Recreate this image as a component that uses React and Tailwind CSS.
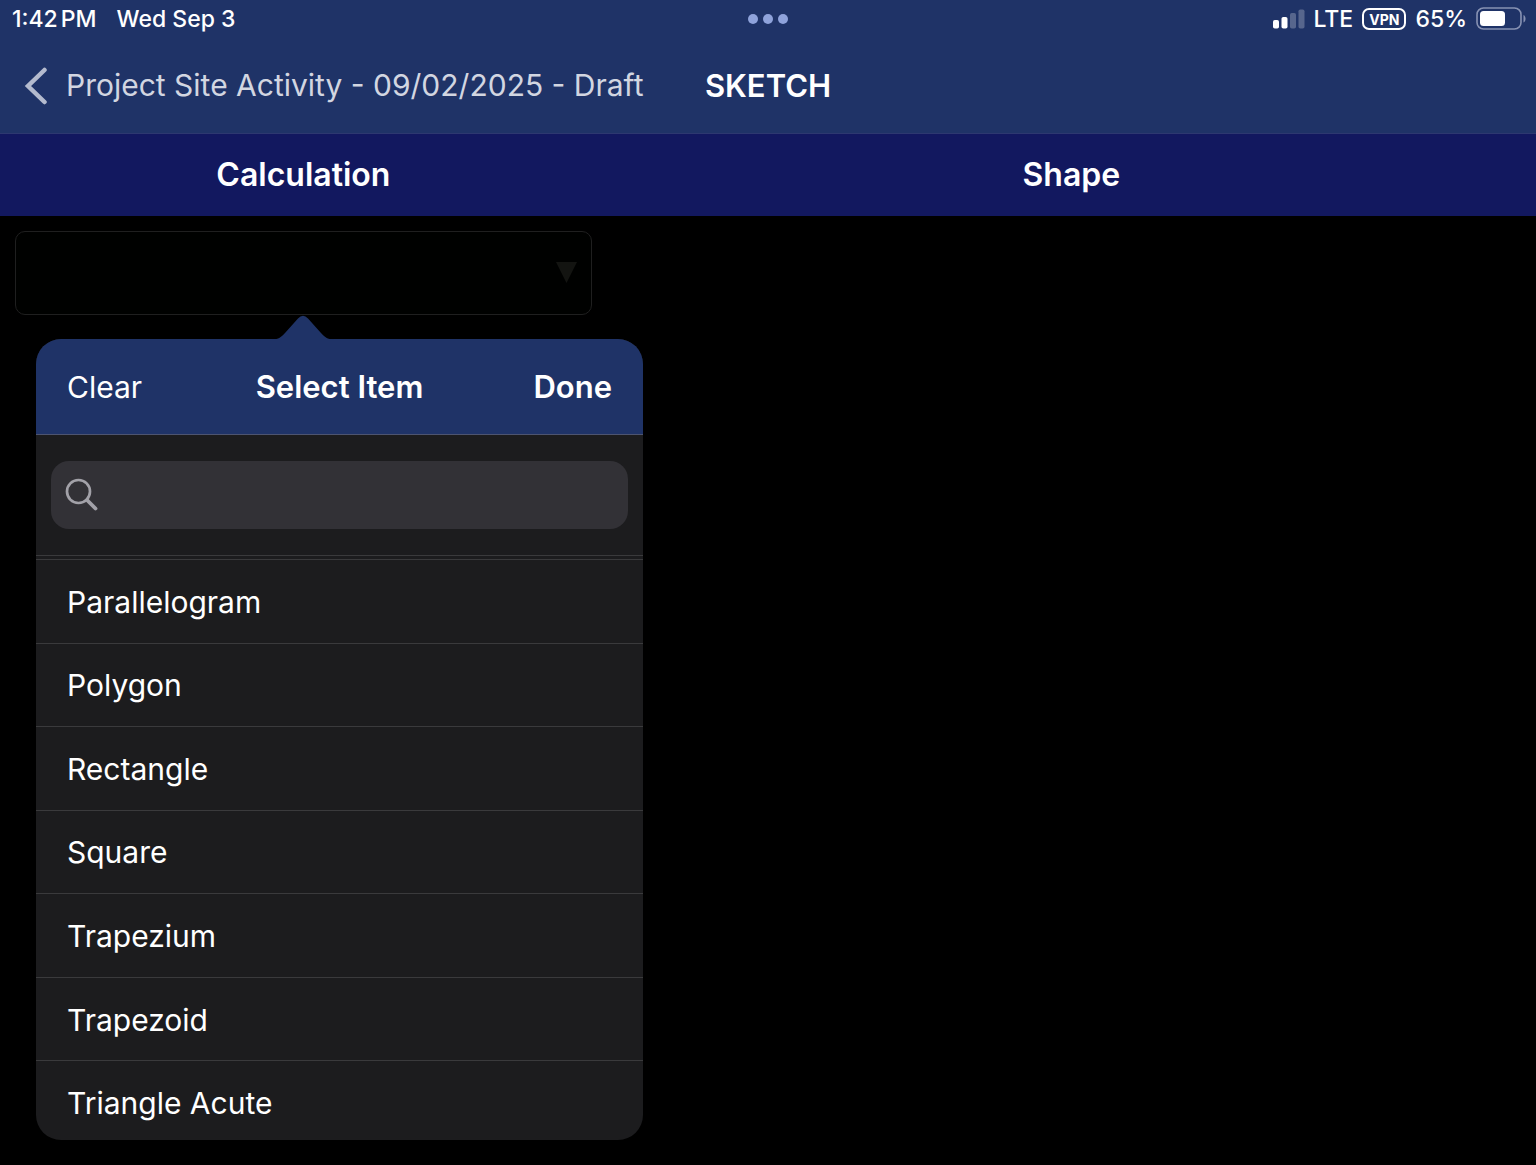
import React from "react";

const SHAPES = [
  "Parallelogram",
  "Polygon",
  "Rectangle",
  "Square",
  "Trapezium",
  "Trapezoid",
  "Triangle Acute",
];

function Signal() {
  return (
    <svg width="32" height="20" viewBox="0 0 32 20" fill="#fff" aria-hidden="true">
      <rect x="0" y="11" width="6" height="8.500" rx="1.8" />
      <rect x="8.500" y="8" width="6" height="11.500" rx="1.8" />
      <rect x="17" y="4" width="6" height="15.500" rx="1.8" opacity="0.25" />
      <rect x="25.500" y="0.500" width="6" height="19" rx="1.8" opacity="0.25" />
    </svg>
  );
}

function Battery() {
  return (
    <svg width="50" height="24" viewBox="0 0 50 24" aria-hidden="true">
      <rect x="1" y="1" width="44" height="21" rx="6.500" fill="none" stroke="#8792b3" strokeWidth="1.600" />
      <rect x="4" y="4" width="25" height="15" rx="3.500" fill="#fff" />
      <path d="M47.500 8c2.700 1 2.700 6.500 0 7.500z" fill="#8792b3" />
    </svg>
  );
}

function StatusBar() {
  return (
    <div className="grid h-[38px] grid-cols-[1fr_auto_1fr] items-center px-[10px] text-[23px] font-medium text-white">
      <div className="flex gap-5 pl-0.5">
        <span>
          1:42<span className="ml-[3px]">PM</span>
        </span>
        <span>Wed Sep 3</span>
      </div>
      <div className="flex gap-[5px]">
        <span className="size-[10px] rounded-full bg-[#8fa3db]" />
        <span className="size-[10px] rounded-full bg-[#8fa3db]" />
        <span className="size-[10px] rounded-full bg-[#8fa3db]" />
      </div>
      <div className="flex items-center justify-end gap-[9px]">
        <Signal />
        <span>LTE</span>
        <span className="flex h-[22px] items-center rounded-[7px] border-2 border-white px-[5px] text-[14px] font-bold">
          VPN
        </span>
        <span>65%</span>
        <Battery />
      </div>
    </div>
  );
}

function NavBar() {
  return (
    <nav className="grid h-[96px] grid-cols-[1fr_auto_1fr] items-center border-b border-[#2d3870] px-6 text-[31px]">
      <a href="#activity" className="flex items-center gap-[18px] whitespace-nowrap text-[30px] text-[#d2d6e1]">
        <svg width="24" height="38" viewBox="0 0 24 38" fill="none" aria-hidden="true">
          <path d="M20.500 3L4 19l16.500 16" stroke="#b4bbce" strokeWidth="4.500" strokeLinecap="round" strokeLinejoin="miter" />
        </svg>
        Project Site Activity - 09/02/2025 - Draft
      </a>
      <h1 className="pt-0.5 font-semibold text-white">SKETCH</h1>
    </nav>
  );
}

function Popover() {
  return (
    <div role="dialog" aria-label="Select Item" className="absolute left-[21px] top-full z-10 w-[607px] pt-[24px]">
      <svg className="absolute left-[236px] top-0" width="62" height="26" viewBox="0 0 62 26" aria-hidden="true">
        <path d="M0 24.500C7 24.500 9 22 13 18L26 3.500Q31 -2 36 3.500L49 18C53 22 55 24.500 62 24.500V26H0Z" fill="#1f3367" />
      </svg>
      <div className="h-[801px] overflow-hidden rounded-[25px] bg-[#1c1c1e] text-[30px] text-white">
        <div className="grid h-[96px] grid-cols-[1fr_auto_1fr] items-center border-b border-[#4d5470] bg-[#1f3367] px-[31px] pt-0.5 text-[31px]">
          <button type="button" className="justify-self-start text-[30px]">Clear</button>
          <h2 className="font-semibold">Select Item</h2>
          <button type="button" className="justify-self-end font-semibold">Done</button>
        </div>
        <div className="h-[121px] border-b border-[#3a3a3c] px-[15px] py-[26px]">
          <label className="flex h-[68px] items-center gap-3 rounded-[18px] bg-[#323136] px-[14px]">
            <svg width="34" height="34" viewBox="0 0 34 34" fill="none" stroke="#a2a1a8" aria-hidden="true">
              <circle cx="13.500" cy="13.500" r="11.500" strokeWidth="2.700" />
              <path d="M22 22l8.500 8.500" strokeWidth="3.800" strokeLinecap="round" />
            </svg>
            <input type="search" aria-label="Search" className="min-w-0 flex-1 bg-transparent outline-none" />
          </label>
        </div>
        <ul className="mt-[3px] grid h-[585px] grid-rows-7">
          {SHAPES.map((shape) => (
            <li key={shape} className="border-t border-[#3a3a3c]">
              <button type="button" className="flex h-full w-full items-center px-[31px] pt-0.5 text-left">
                {shape}
              </button>
            </li>
          ))}
        </ul>
      </div>
    </div>
  );
}

export default function App() {
  return (
    <div className="min-h-screen overflow-hidden bg-black font-['Inter',sans-serif]">
      <header className="bg-[#1f3367]">
        <StatusBar />
        <NavBar />
      </header>
      <div className="grid h-[82px] grid-cols-[79fr_121fr] items-center bg-[#12185f] text-center text-[32px] font-semibold text-white">
        <label htmlFor="calculation">Calculation</label>
        <h2>Shape</h2>
      </div>
      <main className="grid min-h-[949px] grid-cols-[79fr_121fr] items-start">
        <div className="p-[15px]">
          <div className="relative">
            <select
              id="calculation"
              defaultValue=""
              className="block h-[84px] w-full appearance-none rounded-[10px] border border-[#1f1f1f] bg-[#000100] px-4 text-[30px] text-white"
            >
              <option value="" />
              {SHAPES.map((shape) => (
                <option key={shape}>{shape}</option>
              ))}
            </select>
            <svg className="pointer-events-none absolute right-[15px] top-[31px]" width="21" height="21" viewBox="0 0 21 21" aria-hidden="true">
              <path d="M0 0h21L10.500 21z" fill="#131411" />
            </svg>
            <Popover />
          </div>
        </div>
      </main>
    </div>
  );
}
